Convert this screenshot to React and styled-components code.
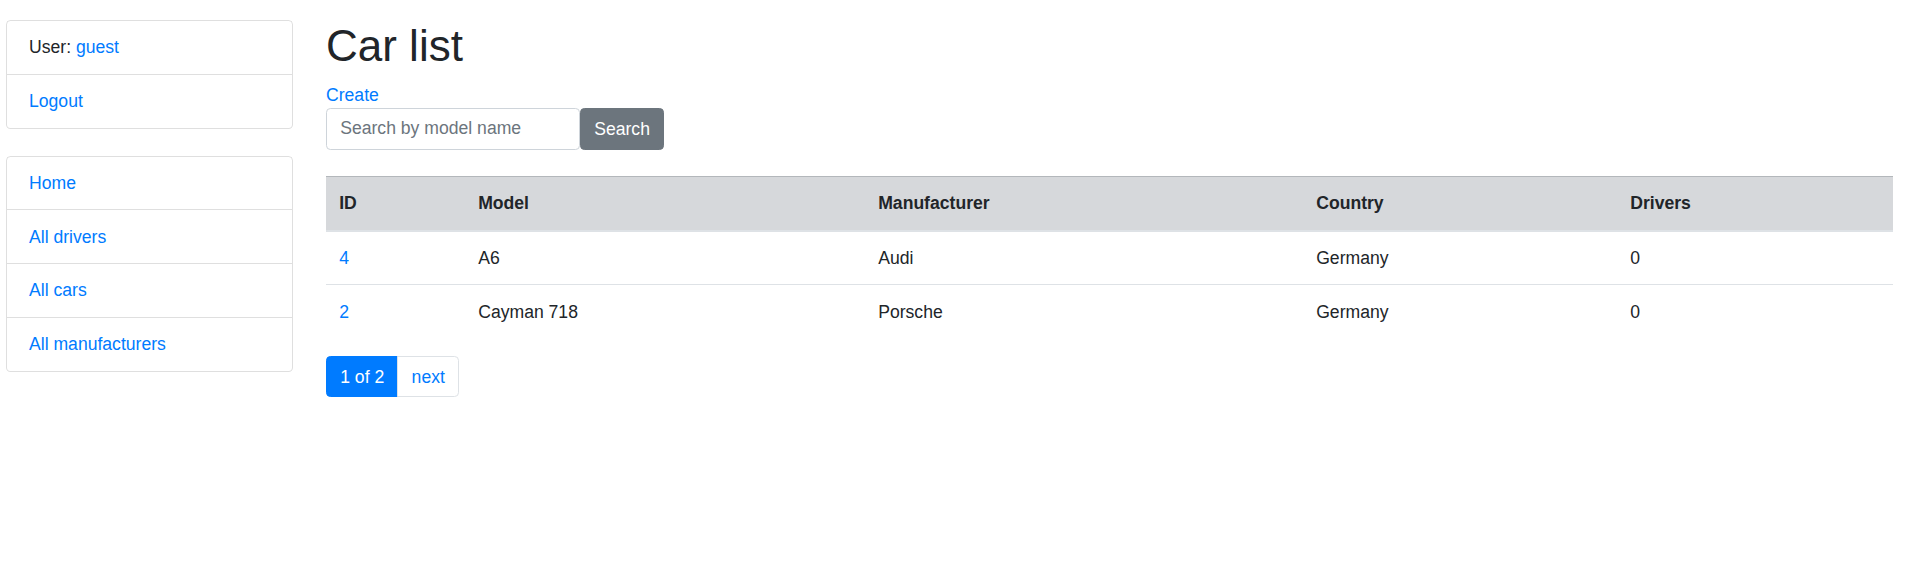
import React from 'react';
import styled, { createGlobalStyle } from 'styled-components';

const GlobalStyle = createGlobalStyle`
    body {
        margin: 0;
        font-family: "Liberation Sans", Arial, sans-serif;
        font-size: 17.6px;
        line-height: 1.5;
        color: #212529;
        background: #fff;
    }
    * {
        box-sizing: border-box;
    }
`

const cars = [
    { id: 4, model: 'A6', manufacturer: 'Audi', country: 'Germany', drivers: 0 },
    { id: 2, model: 'Cayman 718', manufacturer: 'Porsche', country: 'Germany', drivers: 0 },
];

const columns = [
    { title: 'ID', width: 139 },
    { title: 'Model', width: 400 },
    { title: 'Manufacturer', width: 438 },
    { title: 'Country', width: 314 },
    { title: 'Drivers' },
];

function App() {
    return (
        <>
            <GlobalStyle />
            <Page>
                <Sidebar>
                    <ListGroup>
                        <ListItem>User: <Link href="#">guest</Link></ListItem>
                        <ListItem><Link href="#">Logout</Link></ListItem>
                    </ListGroup>
                    <ListGroup>
                        <ListItem><Link href="#">Home</Link></ListItem>
                        <ListItem><Link href="#">All drivers</Link></ListItem>
                        <ListItem><Link href="#">All cars</Link></ListItem>
                        <ListItem><Link href="#">All manufacturers</Link></ListItem>
                    </ListGroup>
                </Sidebar>
                <Main>
                    <Title>Car list</Title>
                    <Link href="#">Create</Link>
                    <SearchForm onSubmit={(e) => e.preventDefault()}>
                        <SearchInput placeholder="Search by model name" />
                        <SearchButton type="submit">Search</SearchButton>
                    </SearchForm>
                    <Table>
                        <colgroup>
                            {columns.map((c) => (
                                <col key={c.title} style={c.width ? { width: c.width } : undefined} />
                            ))}
                        </colgroup>
                        <thead>
                            <tr>
                                {columns.map((c) => <Th key={c.title}>{c.title}</Th>)}
                            </tr>
                        </thead>
                        <tbody>
                            {cars.map((car) => (
                                <tr key={car.id}>
                                    <Td><Link href="#">{car.id}</Link></Td>
                                    <Td>{car.model}</Td>
                                    <Td>{car.manufacturer}</Td>
                                    <Td>{car.country}</Td>
                                    <Td>{car.drivers}</Td>
                                </tr>
                            ))}
                        </tbody>
                    </Table>
                    <Pagination>
                        <PageItem active>1 of 2</PageItem>
                        <PageItem href="#">next</PageItem>
                    </Pagination>
                </Main>
            </Page>
        </>
    )
}

const Page = styled.div`
    display: flex;
    align-items: flex-start;
    padding: 20px 14px 0 6px;
`

const Sidebar = styled.nav`
    flex: 0 0 287px;
    display: flex;
    flex-direction: column;
    gap: 27px;
`

const ListGroup = styled.ul`
    list-style: none;
    margin: 0;
    padding: 0;
    display: flex;
    flex-direction: column;
`

const ListItem = styled.li`
    padding: 13.2px 22px;
    line-height: 26.4px;
    border: 1px solid rgba(0, 0, 0, 0.125);
    & + & {
        border-top-width: 0;
    }
    &:first-child {
        border-top-left-radius: 4.4px;
        border-top-right-radius: 4.4px;
    }
    &:last-child {
        border-bottom-left-radius: 4.4px;
        border-bottom-right-radius: 4.4px;
    }
`

const Link = styled.a`
    color: #007bff;
    text-decoration: none;
`

const Main = styled.main`
    flex: 1;
    margin-left: 33px;
    display: flex;
    flex-direction: column;
    align-items: flex-start;
`

const Title = styled.h1`
    margin: 0 0 8.8px;
    font-size: 44px;
    font-weight: 500;
    line-height: 1.2;
`

const SearchForm = styled.form`
    display: flex;
    margin: 0 0 26px;
`

const SearchInput = styled.input`
    width: 254px;
    height: 41.8px;
    padding: 6.6px 13.2px;
    font-family: inherit;
    font-size: 17.6px;
    color: #495057;
    border: 1px solid #ced4da;
    border-radius: 4.4px;
    outline: none;
    &::placeholder {
        color: #6c757d;
    }
`

const SearchButton = styled.button`
    height: 41.8px;
    padding: 6.6px 13.2px;
    font-family: inherit;
    font-size: 17.6px;
    line-height: 26.4px;
    color: #fff;
    background: #6c757d;
    border: 1px solid #6c757d;
    border-radius: 4.4px;
`

const Table = styled.table`
    width: 100%;
    border-collapse: collapse;
    table-layout: fixed;
    margin-bottom: 17.6px;
`

const Th = styled.th`
    text-align: left;
    font-weight: 700;
    padding: 13.2px;
    line-height: 26.4px;
    background: #d6d8db;
    border-top: 1px solid #b3b7bb;
    border-bottom: 2px solid #dee2e6;
`

const Td = styled.td`
    padding: 13.2px;
    line-height: 26.4px;
    border-top: 1px solid #dee2e6;
`

const Pagination = styled.div`
    display: flex;
`

const PageItem = styled.a`
    display: block;
    padding: 8.8px 13.2px;
    line-height: 22px;
    text-decoration: none;
    color: ${props => props.active ? '#fff' : '#007bff'};
    background: ${props => props.active ? '#007bff' : '#fff'};
    border: 1px solid ${props => props.active ? '#007bff' : '#dee2e6'};
    & + & {
        margin-left: -1px;
    }
    &:first-child {
        border-top-left-radius: 4.4px;
        border-bottom-left-radius: 4.4px;
    }
    &:last-child {
        border-top-right-radius: 4.4px;
        border-bottom-right-radius: 4.4px;
    }
`

export default App;
